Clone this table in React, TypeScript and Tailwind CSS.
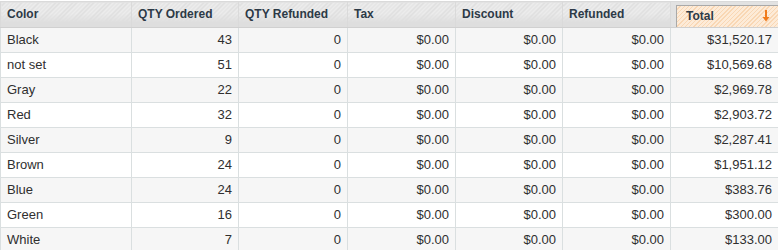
import React from "react";

type Row = {
  color: string;
  ordered: number;
  refundedQty: number;
  tax: string;
  discount: string;
  refunded: string;
  total: string;
};

const rows: Row[] = [
  { color: "Black", ordered: 43, refundedQty: 0, tax: "$0.00", discount: "$0.00", refunded: "$0.00", total: "$31,520.17" },
  { color: "not set", ordered: 51, refundedQty: 0, tax: "$0.00", discount: "$0.00", refunded: "$0.00", total: "$10,569.68" },
  { color: "Gray", ordered: 22, refundedQty: 0, tax: "$0.00", discount: "$0.00", refunded: "$0.00", total: "$2,969.78" },
  { color: "Red", ordered: 32, refundedQty: 0, tax: "$0.00", discount: "$0.00", refunded: "$0.00", total: "$2,903.72" },
  { color: "Silver", ordered: 9, refundedQty: 0, tax: "$0.00", discount: "$0.00", refunded: "$0.00", total: "$2,287.41" },
  { color: "Brown", ordered: 24, refundedQty: 0, tax: "$0.00", discount: "$0.00", refunded: "$0.00", total: "$1,951.12" },
  { color: "Blue", ordered: 24, refundedQty: 0, tax: "$0.00", discount: "$0.00", refunded: "$0.00", total: "$383.76" },
  { color: "Green", ordered: 16, refundedQty: 0, tax: "$0.00", discount: "$0.00", refunded: "$0.00", total: "$300.00" },
  { color: "White", ordered: 7, refundedQty: 0, tax: "$0.00", discount: "$0.00", refunded: "$0.00", total: "$133.00" },
];

const headers = ["Color", "QTY Ordered", "QTY Refunded", "Tax", "Discount", "Refunded"];

export default function App() {
  return (
    <div className="w-[778px] h-[250px] overflow-hidden bg-white pt-[1px] font-['Liberation_Sans',Arial,sans-serif]">
      <table className="w-[778px] table-fixed border-collapse text-[13px] text-[#2f2f2f]">
        <colgroup>
          <col className="w-[131px]" />
          <col className="w-[107px]" />
          <col className="w-[109px]" />
          <col className="w-[108px]" />
          <col className="w-[107px]" />
          <col className="w-[108px]" />
          <col className="w-[108px]" />
        </colgroup>
        <thead>
          <tr className="h-[25px]">
            {headers.map((h) => (
              <th
                key={h}
                className="border border-[#dadada] border-b-[#d0d0d0] px-[6px] pb-[1px] text-left align-middle text-[12px] font-bold text-[#2d3a47] bg-[linear-gradient(to_bottom,rgba(220,220,220,0)_45%,#dedede_80%),repeating-linear-gradient(135deg,#ececec_0px,#ececec_2px,#dddddd_2px,#dddddd_3px)]"
              >
                {h}
              </th>
            ))}
            <th className="border border-[#dadada] border-b-[#d0d0d0] p-0 align-bottom bg-[#e2e2e2]">
              <div className="ml-[5px] mt-[3px] h-[22px] flex items-center justify-between pl-[9px] pr-[8px] pb-[1px] border-l border-t border-[#a9a9a9] text-[12px] font-bold text-[#2d3a47] bg-[repeating-linear-gradient(135deg,#fdebd8_0px,#fdebd8_2px,#f9d7b4_2px,#f9d7b4_3px)]">
                <span>Total</span>
                <svg width="8" height="12" viewBox="0 0 8 12">
                  <path d="M4 0 V10" stroke="#f07a1a" strokeWidth="2" />
                  <path d="M0.5 7 L4 11.5 L7.5 7 Z" fill="#f07a1a" />
                </svg>
              </div>
            </th>
          </tr>
        </thead>
        <tbody>
          {rows.map((r, i) => (
            <tr key={r.color} className={i % 2 === 0 ? "h-[25px] bg-[#f6f6f6]" : "h-[25px] bg-white"}>
              <td className="border border-[#dadfe0] px-[6px] text-left">{r.color}</td>
              <td className="border border-[#dadfe0] px-[6px] text-right">{r.ordered}</td>
              <td className="border border-[#dadfe0] px-[6px] text-right">{r.refundedQty}</td>
              <td className="border border-[#dadfe0] px-[6px] text-right">{r.tax}</td>
              <td className="border border-[#dadfe0] px-[6px] text-right">{r.discount}</td>
              <td className="border border-[#dadfe0] px-[6px] text-right">{r.refunded}</td>
              <td className="border border-[#dadfe0] px-[6px] text-right">{r.total}</td>
            </tr>
          ))}
        </tbody>
      </table>
    </div>
  );
}
